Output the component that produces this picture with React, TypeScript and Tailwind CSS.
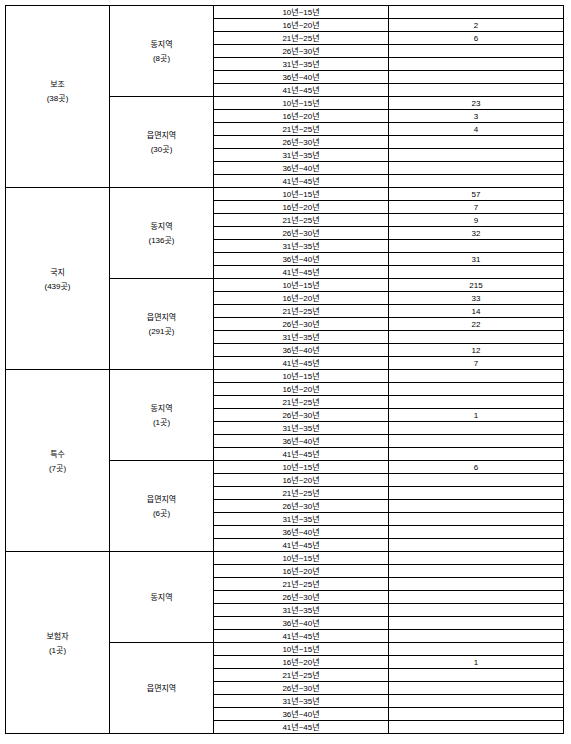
import React from "react";

const ranges = [
  "10년~15년",
  "16년~20년",
  "21년~25년",
  "26년~30년",
  "31년~35년",
  "36년~40년",
  "41년~45년",
];

type Sub = { name: string; count?: string; values: string[] };
type Group = { name: string; count: string; pad: string; subs: Sub[] };

const groups: Group[] = [
  {
    name: "보조",
    count: "(38곳)",
    pad: "pb-[9px]",
    subs: [
      { name: "동지역", count: "(8곳)", values: ["", "2", "6", "", "", "", ""] },
      { name: "읍면지역", count: "(30곳)", values: ["23", "3", "4", "", "", "", ""] },
    ],
  },
  {
    name: "국지",
    count: "(439곳)",
    pad: "pt-[3px]",
    subs: [
      { name: "동지역", count: "(136곳)", values: ["57", "7", "9", "32", "", "31", ""] },
      { name: "읍면지역", count: "(291곳)", values: ["215", "33", "14", "22", "", "12", "7"] },
    ],
  },
  {
    name: "특수",
    count: "(7곳)",
    pad: "pt-[3px]",
    subs: [
      { name: "동지역", count: "(1곳)", values: ["", "", "", "1", "", "", ""] },
      { name: "읍면지역", count: "(6곳)", values: ["6", "", "", "", "", "", ""] },
    ],
  },
  {
    name: "보험자",
    count: "(1곳)",
    pad: "pt-[3px]",
    subs: [
      { name: "동지역", values: ["", "", "", "", "", "", ""] },
      { name: "읍면지역", values: ["", "1", "", "", "", "", ""] },
    ],
  },
];

const font = {
  fontFamily: '"Liberation Sans", "Noto Sans CJK KR", sans-serif',
};

export default function App() {
  return (
    <div className="bg-white w-[571px] h-[744px] pt-[5px] pl-[5px]" style={font}>
      <div className="grid grid-cols-[103px_103px_174px_174px] grid-rows-[repeat(56,12px)] gap-px p-px bg-black w-[559px] text-black text-[8px]">
        {groups.map((g, gi) => (
          <React.Fragment key={gi}>
            <div
              className={`col-start-1 row-span-14 bg-white flex flex-col items-center justify-center leading-[14px] ${g.pad}`}
            >
              <span>{g.name}</span>
              <span>{g.count}</span>
            </div>
            {g.subs.map((s, si) => (
              <React.Fragment key={si}>
                <div className="col-start-2 row-span-7 bg-white flex flex-col items-center justify-center leading-[14px] pt-[1px]">
                  <span>{s.name}</span>
                  {s.count && <span>{s.count}</span>}
                </div>
                {ranges.map((r, ri) => (
                  <React.Fragment key={ri}>
                    <div className="col-start-3 bg-white flex items-center justify-center leading-none pt-[2px]">
                      {r}
                    </div>
                    <div className="col-start-4 bg-white flex items-center justify-center leading-none pt-[2px]">
                      {s.values[ri]}
                    </div>
                  </React.Fragment>
                ))}
              </React.Fragment>
            ))}
          </React.Fragment>
        ))}
      </div>
    </div>
  );
}
